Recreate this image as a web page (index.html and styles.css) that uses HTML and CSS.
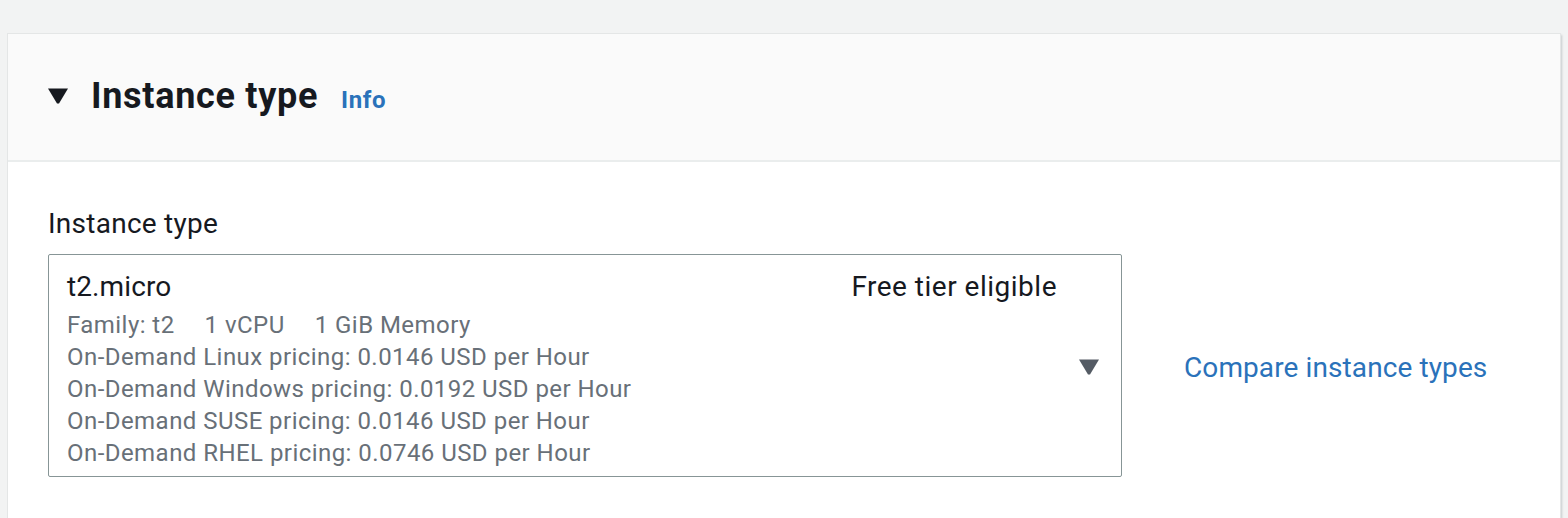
FILE: index.html
```html
<!DOCTYPE html>
<html>
<head>
<meta charset="utf-8">
<link rel="stylesheet" href="styles.css">
</head>
<body>
<section class="card">
  <header class="card-header">
    <svg class="toggle" width="20" height="16" viewBox="0 0 20 16"><path d="M0 0.5 H20 L11 15.5 H9 Z" fill="#16191f"/></svg>
    <h2 class="title">Instance type</h2>
    <a class="info">Info</a>
  </header>
  <div class="card-body">
    <div class="label">Instance type</div>
    <div class="row">
      <div class="select">
        <div class="select-content">
          <div class="select-top">
            <span class="value">t2.micro</span>
            <span class="tag">Free tier eligible</span>
          </div>
          <div class="desc">
            <div class="tags"><span>Family: t2</span><span>1 vCPU</span><span>1 GiB Memory</span></div>
            <div>On-Demand Linux pricing: 0.0146 USD per Hour</div>
            <div>On-Demand Windows pricing: 0.0192 USD per Hour</div>
            <div>On-Demand SUSE pricing: 0.0146 USD per Hour</div>
            <div>On-Demand RHEL pricing: 0.0746 USD per Hour</div>
          </div>
        </div>
        <svg class="caret" width="20" height="16" viewBox="0 0 20 16"><path d="M0 0.5 H20 L11 15.5 H9 Z" fill="#545b64"/></svg>
      </div>
      <a class="compare">Compare instance types</a>
    </div>
  </div>
</section>
</body>
</html>
```
FILE: styles.css
```css
html, body { margin: 0; padding: 0; }
body {
  background: #f2f3f3;
  padding: 34px 8px 0 8px;
  font-family: Roboto, "Noto Sans", sans-serif;
  color: #16191f;
  height: 518px;
  box-sizing: border-box;
  overflow: hidden;
}
.card {
  background: #fff;
  box-shadow: 0 0 0 1px #e4e6e6, 2px 1px 2px 0 rgba(0, 28, 36, 0.18);
  height: 484px;
}
.card-header {
  background: #fafafa;
  height: 128px;
  border-bottom: 2px solid #eaeded;
  box-sizing: border-box;
  display: flex;
  align-items: center;
  padding: 0 40px 3px 40px;
}
.toggle { margin-right: 23px; margin-top: 0; }
.title {
  margin: 0;
  font-size: 36px;
  font-weight: 700;
  line-height: 44px;
  letter-spacing: 0.7px;
}
.info {
  color: #2a72ba;
  font-weight: 700;
  font-size: 24px;
  letter-spacing: 0.6px;
  margin-left: 23px;
  margin-top: 9px;
}
.card-body { padding: 40px 40px 0 40px; }
.label {
  font-size: 28px;
  line-height: 44px;
  letter-spacing: 0.25px;
  color: #16191f;
  margin-bottom: 8px;
}
.row { display: flex; align-items: center; }
.select {
  width: 1074px;
  box-sizing: border-box;
  border: 1px solid #879596;
  border-radius: 2px;
  display: flex;
  align-items: center;
  padding: 10px 22px 7px 18px;
}
.select-content { flex: 1; }
.select-top {
  display: flex;
  justify-content: space-between;
  font-size: 28px;
  line-height: 44px;
  letter-spacing: 0.5px;
  padding-right: 22px;
}
.value { letter-spacing: 0.1px; }
.desc {
  font-size: 24px;
  line-height: 32px;
  letter-spacing: 0.45px;
  color: #687078;
}
.tags { display: flex; gap: 30px; }
.compare {
  color: #2a72ba;
  font-size: 28px;
  margin-left: 62px;
  margin-top: 3px;
  letter-spacing: 0.1px;
}
```
